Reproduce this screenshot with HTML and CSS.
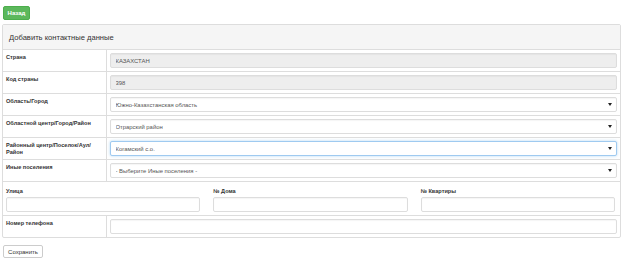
FILE: index.html
```html
<!DOCTYPE html>
<html lang="ru">
<head>
    <meta charset="UTF-8">
    <meta name="viewport" content="width=device-width, initial-scale=1.0">
    <title>Добавить контактные данные</title>
    <link rel="stylesheet" href="styles.css">
</head>
<body>
    <a class="btn btn-back" href="#">Назад</a>

    <div class="panel">
        <div class="panel-heading">Добавить контактные данные</div>
        <table class="form-table">
            <tr>
                <th>Страна</th>
                <td><input class="form-control" type="text" value="КАЗАХСТАН" readonly></td>
            </tr>
            <tr>
                <th>Код страны</th>
                <td><input class="form-control" type="text" value="398" readonly></td>
            </tr>
            <tr>
                <th>Область/Город</th>
                <td>
                    <div class="select-wrap">
                        <select class="form-control"><option>Южно-Казахстанская область</option></select>
                    </div>
                </td>
            </tr>
            <tr>
                <th>Областной центр/Город/Район</th>
                <td>
                    <div class="select-wrap">
                        <select class="form-control"><option>Отрарский район</option></select>
                    </div>
                </td>
            </tr>
            <tr>
                <th>Районный центр/Поселок/Аул/<br>Район</th>
                <td>
                    <div class="select-wrap">
                        <select class="form-control focused"><option>Когамский с.о.</option></select>
                    </div>
                </td>
            </tr>
            <tr>
                <th>Иные поселения</th>
                <td>
                    <div class="select-wrap">
                        <select class="form-control"><option>- Выберите Иные поселения -</option></select>
                    </div>
                </td>
            </tr>
            <tr>
                <td colspan="2" class="address-cell">
                    <div class="address-row">
                        <div class="address-col">
                            <label>Улица</label>
                            <input class="form-control" type="text">
                        </div>
                        <div class="address-col">
                            <label>№ Дома</label>
                            <input class="form-control" type="text">
                        </div>
                        <div class="address-col">
                            <label>№ Квартиры</label>
                            <input class="form-control" type="text">
                        </div>
                    </div>
                </td>
            </tr>
            <tr>
                <th>Номер телефона</th>
                <td><input class="form-control" type="text"></td>
            </tr>
        </table>
    </div>

    <button class="btn btn-save">Сохранить</button>
</body>
</html>
```

FILE: styles.css
```css
* {
    margin: 0;
    padding: 0;
    box-sizing: border-box;
}

body {
    padding: 6px 2px 0 2px;
    font-family: "Liberation Sans", Arial, sans-serif;
    font-size: 6px;
    color: #333;
    background-color: #fff;
}

.btn {
    display: flex;
    align-items: center;
    justify-content: center;
    height: 14px;
    padding: 0 5px;
    border-radius: 2px;
    font-family: inherit;
    font-size: 6px;
    text-decoration: none;
    cursor: pointer;
}

.btn-back {
    margin-left: 1px;
    width: 27px;
    background-color: #5cb85c;
    border: 1px solid #4cae4c;
    color: #fff;
    font-weight: bold;
}

.btn-save {
    margin: 7px 0 0 1px;
    width: 40px;
    height: 13px;
    background-color: #fff;
    border: 1px solid #ccc;
    color: #333;
}

.panel {
    margin-top: 4px;
    border: 1px solid #ddd;
    border-radius: 2px;
    background-color: #fff;
}

.panel-heading {
    height: 25px;
    display: flex;
    align-items: center;
    padding: 0 6px;
    background-color: #f5f5f5;
    border-bottom: 1px solid #ddd;
    font-size: 7.6px;
    color: #333;
}

.form-table {
    width: 100%;
    border-collapse: collapse;
}

.form-table tr + tr td,
.form-table tr + tr th {
    border-top: 1px solid #ddd;
}

.form-table th {
    width: 103px;
    padding: 4px 3px 3px 3px;
    text-align: left;
    vertical-align: top;
    font-size: 5.6px;
    line-height: 7px;
    font-weight: bold;
    border-right: 1px solid #ddd;
}

.form-table td {
    padding: 3px;
    vertical-align: top;
}

.form-control {
    display: block;
    width: 100%;
    height: 15px;
    padding: 0 5px;
    border: 1px solid #ddd;
    border-radius: 2px;
    background-color: #fff;
    font-family: inherit;
    font-size: 5.9px;
    color: #555;
    box-shadow: inset 0 1px 1px rgba(0, 0, 0, 0.04);
}

.form-control[readonly] {
    background-color: #eee;
}

select.form-control {
    appearance: none;
    -webkit-appearance: none;
}

.form-control.focused {
    border-color: #9fcaf0;
    box-shadow: 0 0 3px rgba(102, 175, 233, 0.5);
    outline: none;
}

.select-wrap {
    position: relative;
}

.select-wrap::after {
    content: "";
    position: absolute;
    right: 5px;
    top: 6px;
    border-left: 2px solid transparent;
    border-right: 2px solid transparent;
    border-top: 3px solid #222;
}

.form-table td.address-cell {
    padding: 5px 5px 3px 3px;
}

.address-row {
    display: grid;
    grid-template-columns: 1fr 1fr 1fr;
    column-gap: 13px;
}

.address-col label {
    display: block;
    height: 9px;
    margin-bottom: 1px;
    font-size: 5.6px;
    line-height: 8px;
    font-weight: bold;
}
```
